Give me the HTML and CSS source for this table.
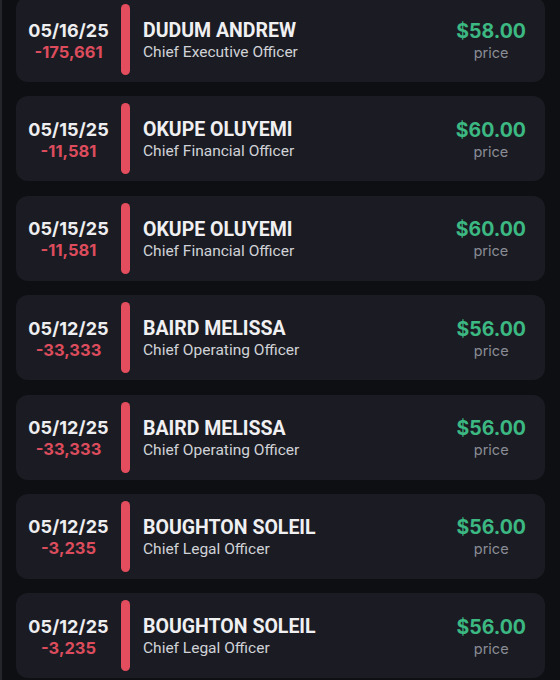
FILE: index.html
```html
<!DOCTYPE html>
<html>
<head>
<meta charset="utf-8">
<link rel="stylesheet" href="styles.css">
</head>
<body>
<div class="list">
  <div class="card">
    <div class="when"><div class="date">05/16/25</div><div class="qty">-175,661</div></div>
    <div class="bar"></div>
    <div class="who"><div class="name">DUDUM ANDREW</div><div class="role">Chief Executive Officer</div></div>
    <div class="cost"><div class="amount">$58.00</div><div class="label">price</div></div>
  </div>
  <div class="card">
    <div class="when"><div class="date">05/15/25</div><div class="qty">-11,581</div></div>
    <div class="bar"></div>
    <div class="who"><div class="name">OKUPE OLUYEMI</div><div class="role">Chief Financial Officer</div></div>
    <div class="cost"><div class="amount">$60.00</div><div class="label">price</div></div>
  </div>
  <div class="card">
    <div class="when"><div class="date">05/15/25</div><div class="qty">-11,581</div></div>
    <div class="bar"></div>
    <div class="who"><div class="name">OKUPE OLUYEMI</div><div class="role">Chief Financial Officer</div></div>
    <div class="cost"><div class="amount">$60.00</div><div class="label">price</div></div>
  </div>
  <div class="card">
    <div class="when"><div class="date">05/12/25</div><div class="qty">-33,333</div></div>
    <div class="bar"></div>
    <div class="who"><div class="name">BAIRD MELISSA</div><div class="role">Chief Operating Officer</div></div>
    <div class="cost"><div class="amount">$56.00</div><div class="label">price</div></div>
  </div>
  <div class="card">
    <div class="when"><div class="date">05/12/25</div><div class="qty">-33,333</div></div>
    <div class="bar"></div>
    <div class="who"><div class="name">BAIRD MELISSA</div><div class="role">Chief Operating Officer</div></div>
    <div class="cost"><div class="amount">$56.00</div><div class="label">price</div></div>
  </div>
  <div class="card">
    <div class="when"><div class="date">05/12/25</div><div class="qty">-3,235</div></div>
    <div class="bar"></div>
    <div class="who"><div class="name">BOUGHTON SOLEIL</div><div class="role">Chief Legal Officer</div></div>
    <div class="cost"><div class="amount">$56.00</div><div class="label">price</div></div>
  </div>
  <div class="card">
    <div class="when"><div class="date">05/12/25</div><div class="qty">-3,235</div></div>
    <div class="bar"></div>
    <div class="who"><div class="name">BOUGHTON SOLEIL</div><div class="role">Chief Legal Officer</div></div>
    <div class="cost"><div class="amount">$56.00</div><div class="label">price</div></div>
  </div>
</div>
</body>
</html>
```
FILE: styles.css
```css
html, body {
  margin: 0;
  padding: 0;
  background: #0e0f13;
  height: 100%;
  overflow: hidden;
}
body {
  border-left: 2px solid #25262b;
  box-sizing: border-box;
  font-family: Roboto, "Liberation Sans", sans-serif;
}
.list {
  display: flex;
  flex-direction: column;
  gap: 14.4px;
  margin-top: -3px;
  padding-left: 14px;
  width: 529px;
}
.card {
  height: 85px;
  background: #1b1c23;
  border-radius: 12px;
  display: flex;
  align-items: center;
  padding: 0 19px 0 12px;
  box-sizing: border-box;
}
.when {
  width: 81px;
  display: flex;
  flex-direction: column;
  align-items: center;
  font-family: Inter, "Noto Sans", sans-serif;
  font-weight: 700;
  padding-top: 2px;
}
.date {
  color: #eeeef0;
  font-size: 18px;
  line-height: 22px;
  letter-spacing: 0.1px;
}
.qty {
  color: #dd4c5d;
  font-size: 16.5px;
  line-height: 20px;
}
.bar {
  width: 9px;
  height: 71px;
  background: #e44d5d;
  border-radius: 5px;
  margin-left: 12px;
  margin-right: 13px;
}
.who {
  flex: 1;
  display: flex;
  flex-direction: column;
  padding-top: 3px;
}
.name {
  color: #f0f0f2;
  font-weight: 700;
  font-size: 19.5px;
  line-height: 22px;
}
.role {
  color: #d0d2d7;
  font-size: 15.5px;
  line-height: 20px;
}
.cost {
  display: flex;
  flex-direction: column;
  align-items: center;
  font-family: Inter, "Noto Sans", sans-serif;
  padding-top: 2px;
}
.amount {
  color: #3cb882;
  font-weight: 700;
  font-size: 19.5px;
  line-height: 23px;
}
.label {
  color: #8a8c95;
  font-size: 14.5px;
  line-height: 19px;
}
```
